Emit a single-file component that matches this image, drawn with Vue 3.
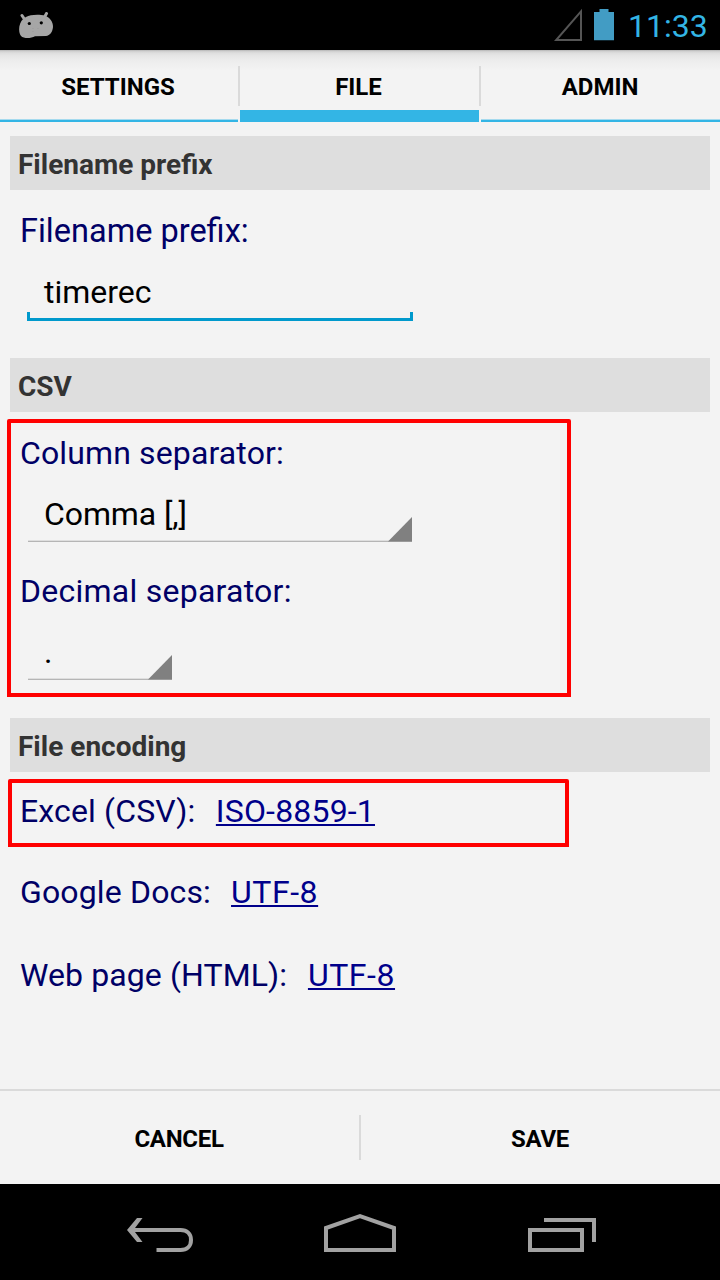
<script setup>
const encodings = [
  { label: 'Excel (CSV):', value: 'ISO-8859-1', cls: 'excel', marked: true },
  { label: 'Google Docs:', value: 'UTF-8', cls: 'docs' },
  { label: 'Web page (HTML):', value: 'UTF-8', cls: 'web' },
]
</script>

<template>
  <div class="screen">
    <header class="status">
      <svg class="droid" width="36" height="28" viewBox="0 0 36 28">
        <path d="M4 3.500L7 8M28.500 1.500L26 6" stroke="#a6a6a6" stroke-width="3" stroke-linecap="round" />
        <path d="M8 5C12 2.600 21 2 27 3.700C32 5.500 35.300 10 35 15C34.500 20 32 23.500 28 24L17 24.300C13 26.500 6 27 3 24C0 20 0 9 8 5Z" fill="#a6a6a6" />
        <circle cx="11.300" cy="11.500" r="1.600" /><circle cx="23.300" cy="10.800" r="1.600" />
        <path d="M15 16v1M15 19v1M20 16v1" stroke="#999" />
      </svg>
      <svg class="signal" width="30" height="34" viewBox="0 0 30 34">
        <path d="M2.200 32H27V3.400Z" fill="none" stroke="#555" stroke-width="2" />
      </svg>
      <svg class="battery" width="20" height="32" viewBox="0 0 20 32">
        <path d="M0 3H5.500V0H14.500V3H20V31.300H0Z" fill="#429cc4" />
      </svg>
      <span class="clock">11:33</span>
    </header>

    <nav class="tabs">
      <div class="tab">SETTINGS</div>
      <i class="divider"></i>
      <div class="tab active">FILE</div>
      <i class="divider"></i>
      <div class="tab last">ADMIN</div>
    </nav>

    <main class="content">
      <section class="prefix">
        <h2>Filename prefix</h2>
        <div class="label first">Filename prefix:</div>
        <div class="input">timerec</div>
      </section>

      <section class="csv">
        <h2>CSV</h2>
        <div class="label column">Column separator:</div>
        <div class="spinner">Comma [,]
          <svg width="24" height="25" viewBox="0 0 24 25"><path d="M24 0V24.500H0Z" fill="#808080" /></svg>
        </div>
        <div class="label second">Decimal separator:</div>
        <div class="spinner short">.
          <svg width="24" height="25" viewBox="0 0 24 25"><path d="M24 0V24.500H0Z" fill="#808080" /></svg>
        </div>
        <div class="mark"></div>
      </section>

      <section class="encoding">
        <h2>File encoding</h2>
        <div v-for="e in encodings" :key="e.label" class="row" :class="e.cls">
          <span>{{ e.label }}</span><a>{{ e.value }}</a>
          <div v-if="e.marked" class="mark"></div>
        </div>
      </section>
    </main>

    <footer class="actions">
      <div class="action">CANCEL</div>
      <i></i>
      <div class="action">SAVE</div>
    </footer>

    <div class="navbar">
      <svg width="720" height="96" viewBox="0 0 720 96" fill="none" stroke="#a2a2a2" stroke-width="4">
        <path d="M130 46H180.500C187 46 191 50 191 56S187 66 180.500 66H156.500" />
        <path d="M137 34h5.500L133.500 46L142.500 58H137L127 46Z" fill="#a2a2a2" stroke="none" />
        <path d="M326 66V44L360 32.200L394 44V66Z" />
        <path d="M530 46H582V66H530ZM544 36H594V58" />
      </svg>
    </div>
  </div>
</template>

<style>
body { margin: 0; background: #000; }
</style>

<style scoped>
* { box-sizing: border-box; }
.screen {
  width: 720px; height: 1280px; display: flex; flex-direction: column; overflow: hidden;
  background: #f3f3f3; font-family: Roboto, "Liberation Sans", sans-serif; color: #000;
}
.status { height: 50px; flex: none; background: #000; display: flex; align-items: flex-start; }
.droid { margin: 12px 0 0 18px; }
.signal { margin: 8px 0 0 auto; }
.battery { margin: 9px 0 0 10px; }
.clock { font-size: 32px; line-height: 40px; color: #33b5e5; margin: 6px 12px 0 14px; width: 80px; white-space: nowrap; }
.tabs {
  height: 72px; flex: none; display: grid; grid-template-columns: 238px 2px 239px 2px 239px;
  background: linear-gradient(#b0b0b0 0, #cdcdcd 1px, #dedede 3px, #e6e6e6 6px, #ededed 11px, #f3f3f3 20px);
}
.tab {
  border-bottom: 2px solid #33b5e5; text-align: center;
  font-size: 24px; font-weight: 700; line-height: 30px; padding: 22px 2px 0 0;
  box-shadow: inset 0 -1px 0 #a5daee;
}
.tab.active { border-bottom-width: 12px; box-shadow: none; }
.tab.last { padding-right: 1px; }
.divider { width: 2px; height: 40px; margin-top: 16px; background: #dadada; }
.content { height: 967px; flex: none; padding: 14px 10px 0; }
h2 {
  margin: 0; height: 54px; background: #dedede; color: #333;
  font-size: 28px; line-height: 54px; padding: 2px 8px 0; font-weight: 700;
}
.prefix { height: 222px; }
.csv { height: 360px; position: relative; }
.label { font-size: 32px; line-height: 40px; color: #006; margin: 21px 0 0 10px; letter-spacing: 0.25px; }
.label.first { font-size: 32.5px; letter-spacing: normal; }
.label.column { letter-spacing: 0.13px; }
.label.second { margin-top: 29px; }
.input {
  position: relative; font-size: 32px; line-height: 40px; width: 386px; height: 70px;
  margin-left: 17px; padding: 21px 0 0 17px; border-bottom: 3px solid #0099cc;
}
.input::before, .input::after {
  content: ""; position: absolute; bottom: 0; width: 3px; height: 6px; background: #0099cc;
}
.input::before { left: 0; }
.input::after { right: 0; }
.spinner {
  position: relative; width: 384px; height: 69px; margin-left: 18px;
  padding: 21px 0 0 16px; font-size: 32px; line-height: 40px; letter-spacing: -0.1px;
  border-bottom: 1px solid #b5b5b5; box-shadow: inset 0 -1px 0 #dedede;
}
.spinner.short { width: 144px; }
.spinner svg { position: absolute; right: 0; bottom: -1px; }
.mark { position: absolute; border: 4px solid #f00; border-radius: 2px 2px 0 0; }
.csv .mark { left: -3px; top: 61px; width: 564px; height: 278px; }
.row { position: relative; display: flex; font-size: 32px; line-height: 40px; padding-left: 10px; color: #006; letter-spacing: 0.15px; }
.row a {
  color: #00008b; margin-left: 20px; letter-spacing: 0.55px; text-decoration: underline;
  text-decoration-thickness: 2px; text-underline-offset: 2px; text-decoration-skip-ink: none;
}
.excel { margin-top: 19px; }
.excel a { letter-spacing: 0.18px; margin-left: 20.5px; }
.excel .mark { left: -2px; top: -12px; width: 561px; height: 68px; }
.docs { margin-top: 41px; }
.web { margin-top: 43px; letter-spacing: 0.1px; }
.web a { margin-left: 20.8px; }
.actions { height: 95px; flex: none; border-top: 2px solid #dadada; display: flex; }
.action { flex: 1; text-align: center; font-size: 24px; font-weight: 700; line-height: 30px; padding: 33px 1px 0 0; letter-spacing: -0.3px; }
.actions i { width: 2px; height: 45px; margin-top: 24px; background: #dadada; }
.navbar { height: 96px; flex: none; background: #000; }
.navbar svg { display: block; }
</style>
